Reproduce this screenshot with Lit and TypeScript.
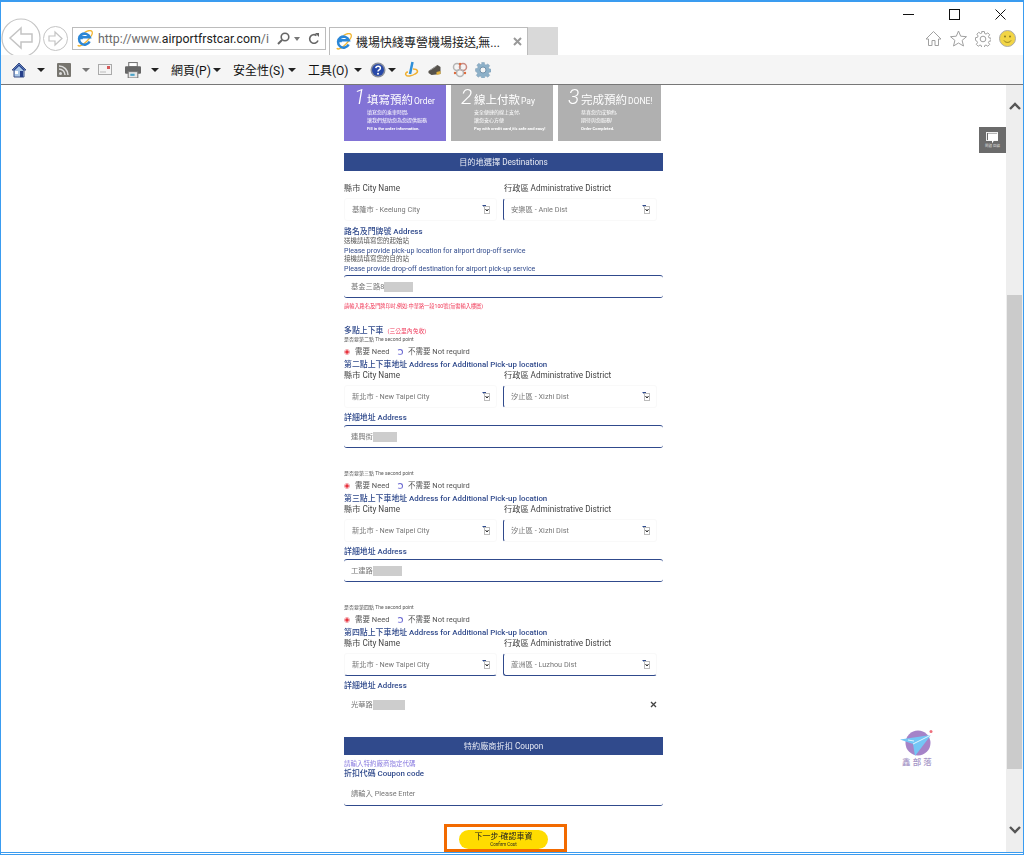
import { LitElement, html, css } from "lit";
import { customElement } from "lit/decorators.js";

const ieLogo = (s: number) => html`<svg width=${s} height=${s} viewBox="0 0 20 20" class="nos">
  <path d="M2 18c2 2 6 0 11-5s8-10 5-12c-2-1-5 0-8 2" fill="none" stroke="#f2b632" stroke-width="1.500"/>
  <path d="M16 13.500a6.500 6.500 0 1 1 .2-5H6.500V11" fill="none" stroke="#2a86d6" stroke-width="3"/>
</svg>`;

const caret = () => html`<span class="caret"></span>`;
const sp = (w: number) => html`<span class="sp" style="width:${w}px"></span>`;

const home = html`<svg width="16" height="17" viewBox="0 0 16 17" class="nos"><path d="M8 2 1 9h2v7h10V9h2z" fill="#a9c6e6" stroke="#3a4f86"/><path d="M3 9l5-5 5 5" fill="none" stroke="#24408f" stroke-width="1.500"/><rect x="9" y="10" width="3" height="6" fill="#27408b"/><rect x="4" y="10" width="3" height="3" fill="#fff"/></svg>`;
const rss = html`<svg width="14" height="14" viewBox="0 0 14 14" class="nos"><rect width="14" height="14" rx="1" fill="#77756f"/><circle cx="3.500" cy="10.500" r="1.500" fill="#ddd"/><path d="M2 6a6 6 0 0 1 6 6M2 3a9 9 0 0 1 9 9" fill="none" stroke="#ddd" stroke-width="1.500"/></svg>`;
const mail = html`<svg width="14" height="11" viewBox="0 0 14 11" class="nos"><rect x=".5" y=".5" width="13" height="10" fill="#f4f4f4" stroke="#aaa"/><path d="M2 8h6" stroke="#bbb"/><rect x="9" y="2" width="3" height="3" fill="#d65a5a"/></svg>`;
const printer = html`<svg width="16" height="16" viewBox="0 0 15 15" class="nos"><rect x="3.500" y=".5" width="8" height="4" fill="#fff" stroke="#777"/><rect y="4" width="15" height="7" rx="1" fill="#666"/><rect x="3" y="9" width="9" height="6" fill="#e8e8e8" stroke="#777"/><rect x="5" y="11" width="4" height="2" fill="#4aa3c8"/></svg>`;
const help = html`<svg width="16" height="16" viewBox="0 0 16 16" class="nos"><circle cx="8" cy="8" r="7.500" fill="#8a8f9c"/><circle cx="8" cy="8" r="6" fill="#2748a8"/><path d="M5.800 6.200c.3-2.600 4.600-2.500 4.600 0 0 1.800-2.400 1.700-2.400 3.400" fill="none" stroke="#fff" stroke-width="1.500"/><circle cx="8" cy="11.800" r="1" fill="#fff"/></svg>`;
const pin = html`<svg width="15" height="18" viewBox="0 0 15 18" class="nos"><path d="M8.500 1l-2.500 12" stroke="#2f8fd8" stroke-width="2.500"/><path d="M9 8c5 0 6 3 2 5-3 2-8 3-9 1-1-1 0-3 2-3" fill="none" stroke="#f0b030" stroke-width="1.500"/></svg>`;
const car = html`<svg width="14" height="12" viewBox="0 0 13 12" class="nos"><path d="M0 7l9-6 3 2v7l-9 1-3-2z" fill="#56524c"/><path d="M8 8l4-1v3l-4 1z" fill="#e2b33e"/><path d="M2 6l6-4" stroke="#999"/></svg>`;
const knot = html`<svg width="16" height="16" viewBox="0 0 16 16" class="nos"><circle cx="5" cy="5" r="3.500" fill="none" stroke="#b5b5b5" stroke-width="1.500"/><circle cx="11" cy="5" r="3.500" fill="none" stroke="#c98a80" stroke-width="1.500"/><circle cx="8" cy="11" r="3.500" fill="none" stroke="#b5b5b5" stroke-width="1.500"/><circle cx="8" cy="2" r="1.200" fill="#dd6a3c"/><circle cx="3" cy="11" r="1.200" fill="#dd6a3c"/><circle cx="13" cy="11" r="1.200" fill="#dd6a3c"/></svg>`;
const gearPath = "M6.600 0h2.800l.4 2.200 1.400.6 1.900-1.300 2 2-1.300 1.900.6 1.400 2.200.4v2.800l-2.200.4-.6 1.400 1.300 1.900-2 2-1.900-1.300-1.400.6-.4 2.200H6.600l-.4-2.200-1.400-.6-1.900 1.300-2-2 1.300-1.900-.6-1.400L0 9.400V6.600l2.200-.4.6-1.400-1.300-1.900 2-2 1.900 1.300 1.400-.6z";
const gearBlue = html`<svg width="16" height="16" viewBox="-.5 -.5 17 17" class="nos"><path d=${gearPath} fill="#8db0c8" stroke="#7d9bb3" stroke-width=".5"/><circle cx="8" cy="8" r="3.200" fill="#f5f5f5" stroke="#6f8ea8"/></svg>`;

const selIcon = html`<svg width="8" height="9" viewBox="0 0 8 9" class="nos"><path d="M0 0h4v4z" fill="#2f4b8c"/><rect x="2.500" y="1.500" width="5" height="7" fill="#fff" stroke="#bbb"/><path d="M3.500 4l1.500 2 1.500-2" fill="none" stroke="#222"/></svg>`;

type F = { text: string; hide?: number };

@customElement("app-root")
export class AppRoot extends LitElement {
  static styles = css`
    :host { display: block; width: 1024px; height: 855px; overflow: hidden; background: #fff;
      font-family: Roboto, "Noto Sans CJK TC", sans-serif; }
    * { box-sizing: border-box; }
    .nos { display: block; flex: none; }
    .sp { display: block; flex: none; }
    .window { height: 855px; border: 1px solid #3a9cf0; border-width: 2px 1px 0; display: flex; flex-direction: column; }
    .top { height: 53px; flex: none; display: flex; flex-direction: column; }
    .caption { height: 25px; display: flex; justify-content: flex-end; align-items: center; flex: none; }
    .cap { width: 46px; display: flex; justify-content: center; }
    .nav { display: flex; align-items: flex-start; height: 28px; flex: none; }
    .navbtns { display: flex; align-items: center; margin-top: -9px; gap: 2px; flex: none; }
    .addr { width: 254px; height: 23px; margin-left: 4px; border: 1px solid #bcbcbc; display: flex; align-items: center; padding: 0 3px; flex: none; }
    .url { font-size: 12.300px; color: #6a6a6a; width: 172px; overflow: hidden; white-space: nowrap; margin-left: 5px; flex: none; }
    .url b { font-weight: 400; color: #222; }
    .addr-tools { display: flex; align-items: center; margin-left: 7px; }
    .tab { width: 199px; height: 28px; margin-left: 3px; border: 1px solid #bcbcbc; border-bottom: 0; display: flex; align-items: center; padding-left: 5px; flex: none; }
    .tabtext { font-size: 12px; color: #222; margin-left: 4px; white-space: nowrap; width: 153px; flex: none; }
    .tabx { margin-left: 4px; }
    .newtab { width: 30px; height: 28px; background: #d9d9d9; flex: none; }
    .navicons { margin-left: auto; display: flex; align-items: center; gap: 8px; padding-right: 7px; height: 23px; }
    .tools { height: 30px; background: #f5f5f5; border-bottom: 1px solid #777; flex: none; display: flex; align-items: center; padding-left: 10px; font-size: 12px; color: #111; white-space: nowrap; position: relative; }
    .caret { display: block; width: 0; height: 0; border: 4px solid transparent; border-top: 4px solid #222; border-bottom: 0; flex: none; }
    .caret.g { border-top-color: #777; }
    .caret.s { border-width: 4px 3.500px 0; }
    .w37 { width: 37px; } .w50 { width: 50px; } .w42 { width: 42px; }
    .viewport { flex: 1; min-height: 0; display: flex; position: relative; }
    .page { flex: 1; min-width: 0; overflow: hidden; padding-left: 343px; }
    .col { width: 319px; color: #444; font-size: 8.200px; line-height: 10px; filter: blur(.25px); }
    .steps { display: flex; gap: 5px; height: 56px; }
    .step { width: 102px; background: #b0b0b0; color: #fff; padding: 1px 0 0 10px; white-space: nowrap; }
    .step.on { background: #8273d6; }
    .step.c3 { width: 103px; }
    .stitle { display: flex; align-items: baseline; height: 21px; }
    .num { font: italic 300 21px/22px Roboto, sans-serif; width: 13px; flex: none; }
    .bigc { font-size: 11.500px; line-height: 22px; }
    .eng { font-size: 8.500px; margin-left: 1px; }
    .sub { font-size: 5px; line-height: 7.500px; margin: 2px 0 0 13px; }
    .sub .e { font-size: 4.200px; font-weight: 700; margin-top: 1px; }
    .bar { height: 18px; background: #304a8c; color: #e6e9f3; font-size: 8.200px; line-height: 18px; text-align: center; margin-top: 12px; }
    .two { display: grid; grid-template-columns: 153px 154px; column-gap: 6px; }
    .lab { height: 10px; white-space: nowrap; }
    .lab.r { padding-left: 1px; }
    .fld { height: 23px; display: flex; align-items: center; padding: 0 6px 0 7px; color: #777; font-size: 7.300px; border-radius: 3px; white-space: nowrap; }
    .fld .end { margin-left: auto; }
    .sel.faint { border: 1px solid #f9f9f9; }
    .sel.left { border-left: 1.500px solid #304a8c; }
    .sel.bot { border-bottom: 1.500px solid #304a8c; }
    .box { border-top: 1.500px solid #304a8c; border-bottom: 1.500px solid #304a8c; }
    .blue { color: #304a8c; font-weight: 500; font-size: 7.900px; white-space: nowrap; }
    .hint { color: #304a8c; font-size: 7.050px; line-height: 9px; white-space: nowrap; }
    .hint.k { color: #555; font-size: 6.500px; }
    .mask { display: block; background: #cdcdcd; height: 10px; flex: none; }
    .red { color: #f03050; font-size: 5.200px; line-height: 8px; margin-top: 4px; white-space: nowrap; }
    .multi { display: flex; align-items: center; gap: 4px; margin-top: 16px; height: 10px; }
    .multi i { color: #f04060; font-style: normal; font-size: 5.800px; }
    .tiny { font-size: 5px; line-height: 6px; color: #555; white-space: nowrap; }
    .radios { display: flex; align-items: center; height: 10px; margin-top: 5px; font-size: 7.500px; color: #555; white-space: nowrap; }
    .radio { width: 6px; height: 6px; border-radius: 50%; margin-right: 5px; flex: none; }
    .radio.on { border: 1px solid #f2a0a8; background: radial-gradient(circle, #e8323c 0 1.500px, #fff 1.800px); }
    .radio.off { border: 1.200px solid #6a68d0; border-left-color: transparent; border-bottom-color: #8b89e0; }
    .need { width: 33px; margin-right: 9px; flex: none; }
    .coupon { color: #8a7ce0; font-size: 6.500px; line-height: 9px; margin-top: 5px; white-space: nowrap; }
    .cta { width: 123px; height: 28px; border: 3px solid #f26a00; margin: 18px 0 0 100px; display: flex; justify-content: center; align-items: flex-start; padding: 3px 4px 0 0; }
    .pill { width: 89px; height: 19px; background: #ffdc00; border-radius: 10px; text-align: center; color: #222; flex: none; }
    .pill .a { font-size: 8px; line-height: 11px; padding-top: 1px; }
    .pill .b { font-size: 4.500px; line-height: 6px; }
    .scroll { width: 17px; background: #eeeeee; flex: none; display: flex; flex-direction: column; align-items: center; }
    .thumb { width: 15px; height: 474px; background: #cbcbcb; margin-top: 185px; flex: none; }
    .arrowdn { margin-top: 57px; }
    .arrowup { margin-top: 17px; }
    .fb { position: absolute; left: 978px; top: 42px; width: 27px; height: 26px; background: #6b6b6b; color: #ddd; display: flex; flex-direction: column; align-items: center; padding-top: 5px; }
    .fb span { font-size: 3.500px; line-height: 5px; white-space: nowrap; }
    .wm { position: absolute; left: 898px; top: 644px; width: 36px; display: flex; flex-direction: column; align-items: center; }
    .wm span { font-size: 8.500px; line-height: 10px; color: #a595c6; letter-spacing: 2.200px; white-space: nowrap; margin-left: 2px; font-weight: 500; }
    .bottom { height: 3px; flex: none; border-top: 1px solid #3a9cf0; border-bottom: 1px solid #3a9cf0; }
    .m0 { margin-top: 0; } .m2 { margin-top: 2px; } .m3 { margin-top: 3px; } .m5 { margin-top: 5px; } .m6 { margin-top: 6px; } .m12 { margin-top: 12px; } .m21 { margin-top: 21px; } .m22 { margin-top: 22px; }
    .m4 { margin-top: 4px; }
  `;

  private sel(text: string, cls: string) {
    return html`<div class="fld sel ${cls}"><span>${text}</span><span class="end">${selIcon}</span></div>`;
  }
  private addr(f: F, cls: string, extra?: unknown) {
    return html`<div class="fld ${cls}"><span>${f.text}</span>${f.hide ? html`<span class="mask" style="width:${f.hide}px"></span>` : ""}${extra ?? ""}</div>`;
  }
  private radios() {
    return html`<div class="radios"><span class="radio on"></span><span class="need">需要 Need</span><span class="radio off"></span><span>不需要 Not requird</span></div>`;
  }
  private stop(ord: string, city: string, dist: string, cls1: string, cls2: string, line: F, addrCls: string, extra?: unknown) {
    return html`
      <div class="tiny m22">是否要第${ord}點 The second point</div>
      ${this.radios()}
      ${this.place(ord, city, dist, cls1, cls2, line, addrCls, extra)}`;
  }
  private place(ord: string, city: string, dist: string, cls1: string, cls2: string, line: F, addrCls: string, extra?: unknown) {
    return html`
      <div class="blue m3">第${ord}點上下車地址 Address for Additional Pick-up location</div>
      <div class="two"><div class="lab">縣市 City Name</div><div class="lab r">行政區 Administrative District</div></div>
      <div class="two m5">${this.sel(city, cls1)}${this.sel(dist, cls2)}</div>
      <div class="blue m5">詳細地址 Address</div>
      <div class="m2">${this.addr(line, addrCls, extra)}</div>`;
  }

  render() {
    const gear = html`<svg width="16" height="16" viewBox="-.5 -.5 17 17" class="nos"><path d=${gearPath} fill="#fff" stroke="#9a9a9a"/><circle cx="8" cy="8" r="3" fill="#fff" stroke="#9a9a9a"/></svg>`;
    return html`<div class="window">
      <div class="top">
        <div class="caption">
          <span class="cap"><svg width="11" height="2" class="nos"><rect width="11" height="1" fill="#111"/></svg></span>
          <span class="cap"><svg width="11" height="11" class="nos"><rect x=".5" y=".5" width="10" height="10" fill="none" stroke="#111"/></svg></span>
          <span class="cap"><svg width="11" height="11" class="nos"><path d="M.5.5l10 10M10.500.5l-10 10" stroke="#111"/></svg></span>
        </div>
        <div class="nav">
          <div class="navbtns">
            <svg width="40" height="40" viewBox="0 0 40 40" class="nos"><circle cx="20" cy="20" r="19" fill="#fff" stroke="#c4c4c4" stroke-width="1.200"/><path d="M20 10 9 20l11 10v-6h11v-8H20z" fill="none" stroke="#c4c4c4" stroke-width="1.500"/></svg>
            <svg width="25" height="25" viewBox="0 0 25 25" class="nos"><circle cx="12.500" cy="12.500" r="12" fill="#fff" stroke="#c4c4c4"/><path d="M12 6l7 6.500L12 19v-4H6v-5h6z" fill="none" stroke="#c4c4c4" stroke-width="1.200"/></svg>
          </div>
          <div class="addr">
            ${ieLogo(17)}
            <div class="url">http://www.<b>airportfrstcar.com</b>/i</div>
            <div class="addr-tools">
              <svg width="13" height="13" viewBox="0 0 13 13" class="nos"><circle cx="8" cy="5" r="3.800" fill="none" stroke="#666" stroke-width="1.600"/><path d="M5 8l-4 4" stroke="#666" stroke-width="2"/></svg>
              ${sp(4)}<span class="caret g s"></span>${sp(8)}
              <svg width="12" height="12" viewBox="0 0 12 12" class="nos"><path d="M10 7.500A4.300 4.300 0 1 1 8.500 2.500" fill="none" stroke="#666" stroke-width="1.600"/><path d="M7 0h4v4z" fill="#666"/></svg>
            </div>
          </div>
          <div class="tab">
            ${ieLogo(17)}
            <div class="tabtext">機場快綫專營機場接送,無...</div>
            <svg class="nos tabx" width="9" height="9" viewBox="0 0 9 9"><path d="M1 1l7 7M8 1l-7 7" stroke="#999" stroke-width="2"/></svg>
          </div>
          <div class="newtab"></div>
          <div class="navicons">
            <svg width="17" height="17" viewBox="0 0 17 17" class="nos"><path d="M8.500 1.500 1 9h2.500v6.500h3.500v-5h3v5h3.500V9H16z" fill="#fff" stroke="#a0a0a0"/></svg>
            <svg width="17" height="17" viewBox="0 0 17 17" class="nos"><path d="M8.500 1l2.200 5.200 5.800.5-4.400 3.700 1.400 5.600-5-3-5 3 1.400-5.600L.5 6.700l5.800-.5z" fill="#fff" stroke="#a0a0a0"/></svg>
            ${gear}
            <svg width="17" height="17" viewBox="0 0 17 17" class="nos"><circle cx="8.500" cy="8.500" r="8" fill="#f2d545" stroke="#aaa"/><circle cx="6" cy="6.500" r="1" fill="#8a7a20"/><circle cx="11" cy="6.500" r="1" fill="#8a7a20"/><path d="M5 10.500c1.500 2.500 5.500 2.500 7 0" fill="none" stroke="#8a7a20"/></svg>
          </div>
        </div>
      </div>
      <div class="tools">
        ${home}${sp(10)}${caret()}${sp(12)}${rss}${sp(11)}<span class="caret g"></span>${sp(8)}${mail}${sp(13)}${printer}${sp(10)}${caret()}${sp(12)}
        <span class="w37">網頁(P)</span>${sp(5)}${caret()}${sp(12)}
        <span class="w50">安全性(S)</span>${sp(5)}${caret()}${sp(12)}
        <span class="w42">工具(O)</span>${sp(4)}${caret()}${sp(8)}
        ${help}${sp(2)}${caret()}${sp(8)}${pin}${sp(9)}${car}${sp(10)}${knot}${sp(7)}${gearBlue}
      </div>
      <div class="viewport">
        <div class="page"><div class="col">
          <div class="steps">
            <div class="step on"><div class="stitle"><span class="num">1</span><span class="bigc">填寫預約</span><span class="eng">Order</span></div><div class="sub"><div>填寫您的乘車時間,</div><div>讓我們幫助您為您提供服務</div><div class="e">Fill in the order information.</div></div></div>
            <div class="step"><div class="stitle"><span class="num">2</span><span class="bigc">線上付款</span><span class="eng">Pay</span></div><div class="sub"><div>安全便捷的線上支付,</div><div>讓您安心方便</div><div class="e">Pay with credit card,it's safe and easy!</div></div></div>
            <div class="step c3"><div class="stitle"><span class="num">3</span><span class="bigc">完成預約</span><span class="eng">DONE!</span></div><div class="sub"><div>恭喜您完成預約,</div><div>期待與您服務!</div><div class="e">Order Completed.</div></div></div>
          </div>
          <div class="bar">目的地選擇 Destinations</div>
          <div class="two m12"><div class="lab">縣市 City Name</div><div class="lab r">行政區 Administrative District</div></div>
          <div class="two m5">${this.sel("基隆市 - Keelung City", "faint")}${this.sel("安樂區 - Anle Dist", "faint left")}</div>
          <div class="blue m6">路名及門牌號 Address</div>
          <div class="hint k">送機請填寫您的起始站</div>
          <div class="hint">Please provide pick-up location for airport drop-off service</div>
          <div class="hint k">接機請填寫您的目的站</div>
          <div class="hint">Please provide drop-off destination for airport pick-up service</div>
          <div class="m2">${this.addr({ text: "基金三路8", hide: 29 }, "box")}</div>
          <div class="red">請輸入路名及門牌印吋,例如:中華路一段100號(無需輸入樓層)</div>
          <div class="multi"><span class="blue">多點上下車</span><i>(三公里內免收)</i></div>
          <div class="tiny m0">是否要第二點 The second point</div>
          ${this.radios()}
          ${this.place("二", "新北市 - New Taipei City", "汐止區 - Xizhi Dist", "faint", "faint left", { text: "連興街", hide: 24 }, "box")}
          ${this.stop("三", "新北市 - New Taipei City", "汐止區 - Xizhi Dist", "faint", "faint left", { text: "工建路", hide: 29 }, "box")}
          ${this.stop("四", "新北市 - New Taipei City", "蘆洲區 - Luzhou Dist", "faint bot", "faint left bot", { text: "光華路", hide: 32 }, "", html`<svg class="nos end" width="7" height="7" viewBox="0 0 7 7"><path d="M1 1l5 5M6 1l-5 5" stroke="#444" stroke-width="1.300"/></svg>`)}
          <div class="bar m21">特約廠商折扣 Coupon</div>
          <div class="coupon">請輸入特約廠商指定代碼</div>
          <div class="blue">折扣代碼 Coupon code</div>
          <div class="fld sel bot m4"><span>請輸入 Please Enter</span></div>
          <div class="cta"><div class="pill"><div class="a">下一步-確認車資</div><div class="b">Confirm Cost</div></div></div>
        </div></div>
        <div class="scroll">
          <svg class="nos arrowup" width="12" height="8" viewBox="0 0 12 8"><path d="M1 7l5-5 5 5" fill="none" stroke="#555" stroke-width="2.400"/></svg>
          <div class="thumb"></div>
          <svg class="nos arrowdn" width="12" height="8" viewBox="0 0 12 8"><path d="M1 1l5 5 5-5" fill="none" stroke="#555" stroke-width="2.400"/></svg>
        </div>
        <div class="fb">
          <svg width="13" height="12" viewBox="0 0 13 12" class="nos"><rect x="0.500" y="0.500" width="11" height="8" fill="none" stroke="#eee"/><path d="M2 1.500h10v7H8l-2 3v-3H2z" fill="#fff"/></svg>
          <span>問題 回饋</span>
        </div>
        <div class="wm">
          <svg width="34" height="28" viewBox="0 0 34 28" class="nos"><circle cx="18" cy="14" r="12.500" fill="#a583c8"/><path d="M0 10.500 31 6 15 27l-2-12z" fill="#74c6f5"/><path d="M13 15 31 6M8 11l6 1" stroke="#fff" stroke-width=".8"/><circle cx="31" cy="2.500" r="1.500" fill="#ee6f7c"/></svg>
          <span>鑫部落</span>
        </div>
      </div>
      <div class="bottom"></div>
    </div>`;
  }
}
